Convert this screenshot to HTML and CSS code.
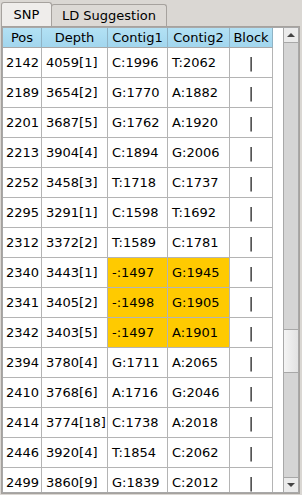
FILE: index.html
```html
<!DOCTYPE html>
<html>
<head>
<meta charset="UTF-8">
<title>SNP</title>
<link rel="stylesheet" href="styles.css">
</head>
<body>
<div class="tabs">
  <div class="tab active">SNP</div>
  <div class="tab">LD Suggestion</div>
</div>
<div class="panel">
  <div class="scrollpane">
    <div class="viewport">
      <div class="grid" id="grid">
        <div class="th">Pos</div>
        <div class="th">Depth</div>
        <div class="th">Contig1</div>
        <div class="th">Contig2</div>
        <div class="th">Block</div>
      </div>
    </div>
    <div class="scrollbar">
      <div class="sb-btn"><span class="arrow-up"></span></div>
      <div class="sb-track"><div class="sb-thumb"></div></div>
      <div class="sb-btn"><span class="arrow-down"></span></div>
    </div>
  </div>
</div>

<script>
  const rows = [
    ['2142', '4059[1]', 'C:1996', 'T:2062'],
    ['2189', '3654[2]', 'G:1770', 'A:1882'],
    ['2201', '3687[5]', 'G:1762', 'A:1920'],
    ['2213', '3904[4]', 'C:1894', 'G:2006'],
    ['2252', '3458[3]', 'T:1718', 'C:1737'],
    ['2295', '3291[1]', 'C:1598', 'T:1692'],
    ['2312', '3372[2]', 'T:1589', 'C:1781'],
    ['2340', '3443[1]', '-:1497', 'G:1945', true],
    ['2341', '3405[2]', '-:1498', 'G:1905', true],
    ['2342', '3403[5]', '-:1497', 'A:1901', true],
    ['2394', '3780[4]', 'G:1711', 'A:2065'],
    ['2410', '3768[6]', 'A:1716', 'G:2046'],
    ['2414', '3774[18]', 'C:1738', 'A:2018'],
    ['2446', '3920[4]', 'T:1854', 'C:2062'],
    ['2499', '3860[9]', 'G:1839', 'C:2012']
  ];

  const grid = document.getElementById('grid');

  rows.forEach(function (r) {
    const hl = r[4] ? ' hl' : '';
    grid.insertAdjacentHTML('beforeend',
      '<div class="td">' + r[0] + '</div>' +
      '<div class="td">' + r[1] + '</div>' +
      '<div class="td' + hl + '">' + r[2] + '</div>' +
      '<div class="td' + hl + '">' + r[3] + '</div>' +
      '<div class="td block">|</div>');
  });
</script>
</body>
</html>
```
FILE: styles.css
```css
body {
  margin: 0;
  width: 302px;
  height: 495px;
  overflow: hidden;
  background-color: #dad7d3;
  font-family: "DejaVu Sans", sans-serif;
  font-size: 13px;
  color: #000;
}

.tabs {
  display: flex;
  align-items: flex-end;
  height: 26px;
  padding-left: 1px;
}

.tab {
  box-sizing: border-box;
  width: 116px;
  height: 22px;
  display: flex;
  align-items: center;
  justify-content: center;
  border: 1px solid #a6a29e;
  border-bottom: none;
  border-radius: 3px 3px 0 0;
  background-color: #dcd9d5;
  margin-left: -1px;
}

.tab.active {
  width: 51px;
  height: 24px;
  margin-left: 0;
  background-color: #efedeb;
  position: relative;
  z-index: 1;
}

.panel {
  box-sizing: border-box;
  width: 299px;
  height: 468px;
  margin-left: 1px;
  border: 1px solid #a6a29e;
  background-color: #efedeb;
}

.scrollpane {
  box-sizing: border-box;
  height: 466px;
  display: flex;
  border: 1px solid #a8a8a8;
  background-color: #fff;
}

.viewport {
  width: 280px;
  overflow: hidden;
  background-color: #fff;
}

.grid {
  display: grid;
  grid-template-columns: 39px 66px 60px 62px 43px;
  grid-template-rows: 20px;
  grid-auto-rows: 30px;
  width: 270px;
}

.th,
.td {
  box-sizing: border-box;
  display: flex;
  align-items: center;
  white-space: nowrap;
  overflow: hidden;
}

.th {
  justify-content: center;
  background: linear-gradient(to bottom, #b3e1f4, #a2d6ee);
  border-right: 1px solid #8fb3c5;
  border-bottom: 1px solid #a8a8a8;
}

.td {
  padding-left: 4px;
  border-right: 1px solid #b4b4b4;
  border-bottom: 1px solid #b4b4b4;
}

.td:nth-child(5n+1) {
  padding-left: 3px;
}

.td.hl {
  background-color: #ffca00;
}

.td.block {
  justify-content: center;
  padding-left: 0;
  font-size: 14px;
  will-change: transform;
}

.scrollbar {
  width: 15px;
  display: flex;
  flex-direction: column;
  background-color: #d5d5d5;
  border-left: 1px solid #a8a8a8;
  box-sizing: border-box;
}

.sb-btn {
  height: 15px;
  display: flex;
  align-items: center;
  justify-content: center;
  background-color: #ebebeb;
  border-bottom: 1px solid #a8a8a8;
  box-sizing: border-box;
}

.sb-btn:last-child {
  border-bottom: none;
  border-top: 1px solid #a8a8a8;
}

.arrow-up {
  border-left: 4px solid transparent;
  border-right: 4px solid transparent;
  border-bottom: 4px solid #444;
}

.arrow-down {
  border-left: 4px solid transparent;
  border-right: 4px solid transparent;
  border-top: 4px solid #444;
}

.sb-track {
  flex: 1;
}

.sb-thumb {
  box-sizing: border-box;
  height: 44px;
  margin-top: 286px;
  background: linear-gradient(to right, #f4f4f4, #e2e2e2);
  border-top: 1px solid #a8a8a8;
  border-bottom: 1px solid #a8a8a8;
}
```
